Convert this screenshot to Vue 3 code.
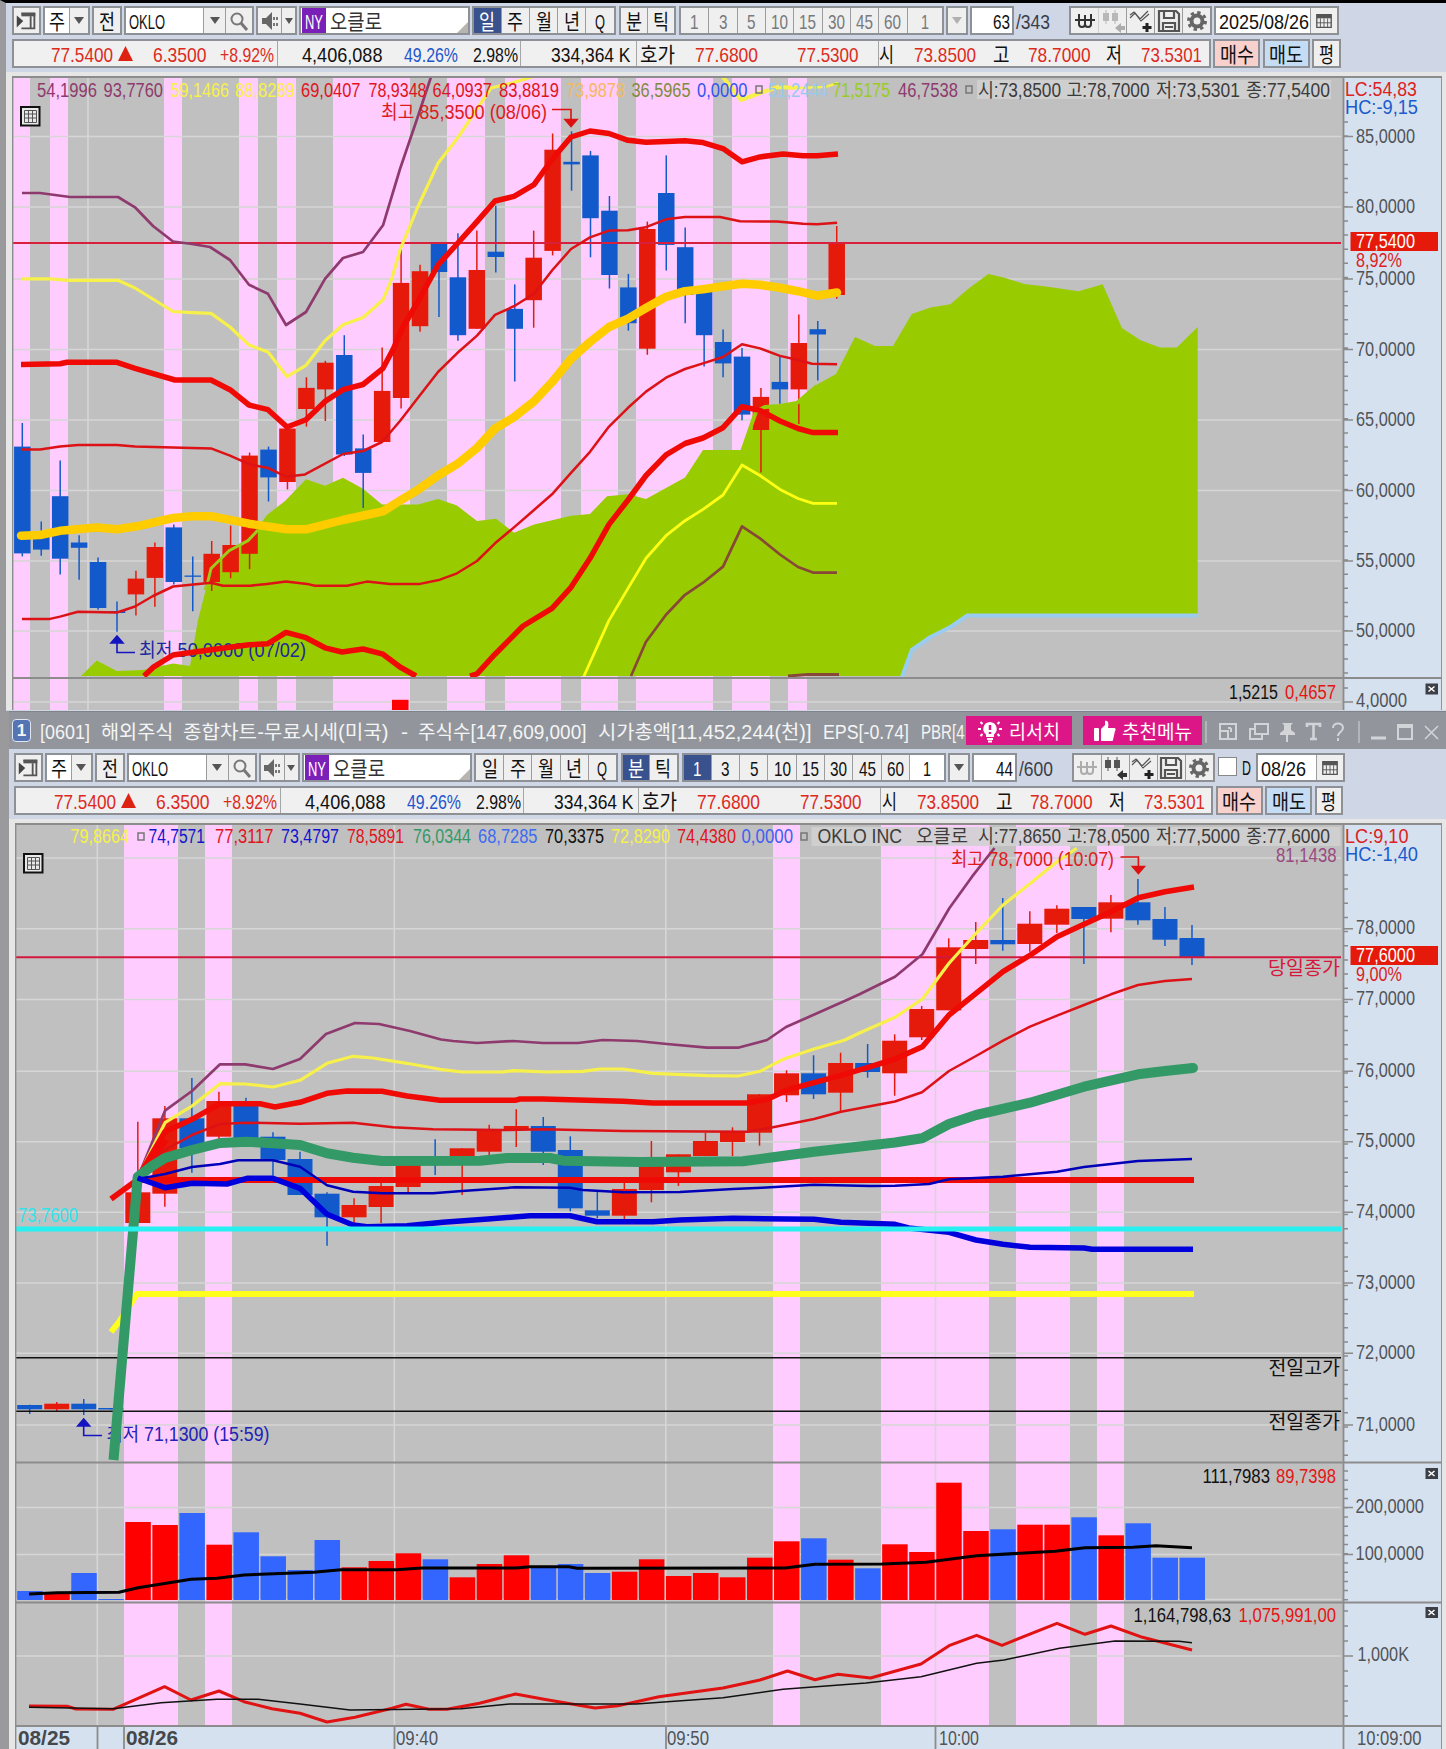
<template>
  <div class="screen">
    <section v-for="w in fenetres" :key="w.id" class="win" :class="'win' + w.id">
      <!-- title bar, only on the second window -->
      <header v-if="w.id == 2" class="titlebar">
        <span class="badge">1</span>
        <Txt v-for="(s, i) in titre" :key="i" :t="s[2]" :w="s[1]" :style="{ marginLeft: s[0] + 'px' }" />
        <button class="promo research">
          <svg width="26" height="26" viewBox="0 0 26 26">
            <path d="M13 4a7 7 0 0 0-4 12.5V19h8v-2.500A7 7 0 0 0 13 4z" fill="#fff" />
            <path d="M10 21h6M11 23.500h4M1 11h3M22 11h3M3.500 4l2 2M22.500 4l-2 2M3.500 18l2-2M22.500 18l-2-2" stroke="#fff" stroke-width="2" fill="none" />
            <path d="M13 7v5M13 14v2" stroke="#dd1688" stroke-width="2.500" />
          </svg>
          <Txt t="리서치" :w="51" />
        </button>
        <button class="promo menu">
          <svg width="23" height="24" viewBox="0 0 23 24">
            <rect x="1" y="9" width="5" height="13" rx="1" fill="#fff" />
            <path d="M8 10l4-4V2c3-1 4 2 3 7h6c2 0 2 2 1 3l-2 9c0 1-1 1-2 1H8z" fill="#fff" />
          </svg>
          <Txt t="추천메뉴" :w="70" />
        </button>
        <svg class="sysicons" width="239" height="30" viewBox="1204 0 239 30" fill="none" stroke="#d2d4d8" stroke-width="2">
          <path d="M1207 5v22M1360 5v22" stroke-width="1" />
          <path d="M1221 8h16v15h-16zM1221 15h8v8M1232 12h-3M1232 12v4" />
          <path d="M1256 8h13v10h-13zM1256 13h-5v10h12v-5" />
          <path d="M1283 7h11l-2 2v5l4 3v2h-15v-2l4-3V9z" fill="#d2d4d8" stroke="none" />
          <path d="M1288 18v8" />
          <path d="M1308 11V8h13v3M1314.500 8v15M1311 23h7" stroke-width="2.600" />
          <path d="M1334 12c0-6 10-6 10 0c0 4-5 4-5 8M1339 22v3" />
          <path d="M1372 22h15" stroke-width="3" />
          <path d="M1399 9h14v14h-14zM1399 11h14" />
          <path d="M1426 10l13 13M1439 10l-13 13" stroke-width="1.500" />
        </svg>
      </header>

      <div class="toolbar">
        <div class="box w-doc">
          <svg width="27" height="27" viewBox="0 0 27 27">
            <path d="M8 6h14v16H8M18 9v13" fill="none" stroke="#555" stroke-width="2" />
            <path d="M8 5h15v4H8z" fill="#555" /><path d="M3 8l7 6-7 7z" fill="#444" />
          </svg>
        </div>
        <div class="box w-kind">
          <div class="field f1"><Txt t="주" :w="16" /></div>
          <div class="cell"><i class="arrow"></i></div>
        </div>
        <div class="box w-prev"><Txt t="전" :w="16" /></div>
        <div class="box w-code">
          <div class="field f2"><Txt t="OKLO" :w="36" /></div>
          <div class="cell w22"><i class="arrow"></i></div>
          <div class="cell">
            <svg width="22" height="24" viewBox="0 0 22 24" fill="none" stroke="#777"><circle cx="9" cy="10" r="5.500" stroke-width="2" /><path d="M13 14l6 7" stroke-width="3" /></svg>
          </div>
        </div>
        <div class="box w-sound">
          <div class="cell">
            <svg width="22" height="24" viewBox="0 0 22 24"><path d="M3 9h4l6-6v18l-6-6H3z" fill="#666" /><path d="M15 8v3M18 8v3M15 14v3M18 14v3" stroke="#777" stroke-width="2" /></svg>
          </div>
          <div class="cell w14"><i class="arrow small"></i></div>
        </div>
        <div class="box w-name">
          <span class="ny"><Txt t="NY" :w="18" /></span>
          <Txt t="오클로" :w="52" /><i class="corner"></i>
        </div>
        <div class="box w-period">
          <div v-for="p in ['일', '주', '월', '년', 'Q']" :key="p" class="cell" :class="{ on: w.on.includes(p) }"><Txt :t="p" :w="p == 'Q' ? 10 : 16" /></div>
        </div>
        <div class="box w-tick">
          <div v-for="p in ['분', '틱']" :key="p" class="cell" :class="{ on: w.on.includes(p) }"><Txt :t="p" :w="16" /></div>
        </div>
        <div class="box w-mins" :class="{ off: w.id == 1 }">
          <div v-for="n in ['1', '3', '5', '10', '15', '30', '45', '60']" :key="n" class="cell" :class="{ on: w.on.includes(n) }"><Txt :t="n" :w="n.length * 8.5" /></div>
          <div class="cell w35" :class="{ white: w.id == 2 }"><Txt t="1" :w="8" /></div>
        </div>
        <div class="box w-drop" :class="{ off: w.id == 1 }"><i class="arrow"></i></div>
        <div class="box w-count"><Txt :t="w.nb" :w="17" /></div>
        <div class="total"><Txt :t="w.total" :w="34" /></div>
        <div class="box w-icons">
          <div class="cell" :class="{ dim: w.id == 2 }">
            <svg width="20" height="20" viewBox="0 0 20 20" fill="none" stroke="#333" stroke-width="2"><path d="M4 3v10q0 3 3 3t3-3V4M10 13q0 3 3 3t3-3V3M0 9h20" /></svg>
          </div>
          <div class="cell" :class="{ dim: w.id == 1 }">
            <svg width="26" height="26" viewBox="0 0 26 26"><path d="M3 5h6v8H3zM12 5h6v8h-6z" fill="#555" /><path d="M6 2v14M15 2v14" stroke="#555" /><path d="M15 20l6-5v3h4v4h-4v3z" fill="#333" /></svg>
          </div>
          <div class="cell">
            <svg width="26" height="26" viewBox="0 0 26 26" fill="none" stroke="#555"><path d="M2 10l5-5 5 6 8-8M2 7l4-3 7 9 8-7" stroke-width="1.200" /><path d="M19 15v9M14.500 19.500h9" stroke="#222" stroke-width="3" /></svg>
          </div>
          <div class="cell">
            <svg width="24" height="24" viewBox="0 0 24 24" fill="none" stroke="#555" stroke-width="2.200"><path d="M2 2h17l3 3v17H2zM7 2v7h10V2M6 22v-8h12v8M8 18h8" /></svg>
          </div>
          <div class="cell">
            <svg width="24" height="24" viewBox="0 0 24 24" fill="none" stroke="#666"><circle cx="12" cy="12" r="5.500" stroke-width="4" /><circle cx="12" cy="12" r="8.500" stroke-width="3" stroke-dasharray="3.340 3.336" /></svg>
          </div>
        </div>
        <template v-if="w.id == 2">
          <span class="check"></span><Txt class="dd" t="D" :w="9" />
        </template>
        <div class="box" :class="'w-date' + w.id">
          <div class="field f3"><Txt :t="w.date" :w="w.dateW" /></div>
          <div class="cell cal">
            <svg width="18" height="18" viewBox="0 0 20 20" fill="none" stroke="#555"><path d="M2 3h16v14H2z" stroke-width="1.500" /><path d="M2 5h16" stroke-width="4" /><path d="M6 7v10M10 7v10M14 7v10M2 12h16" /></svg>
          </div>
        </div>
      </div>

      <div class="quotes">
        <div class="qbox">
          <template v-for="(q, i) in cours" :key="i">
            <span v-if="q[2] == '|'" class="sep" :style="{ marginLeft: q[0] + 'px' }"></span>
            <svg v-else-if="q[2] == '^'" class="tri" width="15" height="15"><path d="M0 15L7.500 0L15 15z" fill="#dd2211" /></svg>
            <Txt v-else :t="q[2]" :w="q[1]" :class="q[3]" :style="{ marginLeft: q[0] + 'px' }" />
          </template>
        </div>
        <div class="box buy"><Txt t="매수" :w="34" /></div>
        <div class="box sell"><Txt t="매도" :w="34" /></div>
        <div class="box avg"><Txt t="평" :w="15" /></div>
      </div>

      <div class="chartframe">
        <svg class="chart" :width="w.w" :height="w.h" :viewBox="`${w.x} ${w.y} ${w.w} ${w.h}`">
          <rect :x="w.x" :y="w.y" :width="w.w" :height="w.h" fill="#c0c0c0" />
          <g shape-rendering="crispEdges">
            <rect v-for="(b, i) in w.bandes" :key="i" :x="b[0]" :y="w.y" :width="b[1] - b[0]" :height="w.bas - w.y" fill="#ffccff" />
          </g>
          <g stroke="#d6d6d6" stroke-width="1.600">
            <line v-for="y in w.grille" :key="'h' + y" :x1="w.x" x2="1341" :y1="y" :y2="y" />
            <line v-for="x in w.gv" :key="'v' + x" :x1="x" :x2="x" :y1="w.y" :y2="w.bas" />
          </g>
          <path v-if="w.nuage" :d="'M' + w.nuage + 'L1197.700 614 967 614 950 626 930 636 911 649 902 676z'" fill="#99cc00" />

          <!-- candles: high, top, bottom, low -->
          <g v-for="(c, i) in w.bougies" :key="'c' + i" :fill="c[0] ? '#e61a0a' : '#125acb'" :stroke="c[0] ? '#e61a0a' : '#125acb'">
            <line :x1="w.x0 + i * w.pas" :x2="w.x0 + i * w.pas" :y1="c[1]" :y2="c[4]" stroke-width="1.500" />
            <rect :x="w.x0 + i * w.pas - w.larg / 2" :y="c[2]" :width="w.larg" :height="Math.max(c[3] - c[2], 1.3)" stroke="none" />
          </g>

          <!-- volume bars -->
          <rect v-for="(b, i) in w.volumes" :key="'b' + i" :x="w.x0 + i * w.pas - 12.5" :y="b[1]" width="25.500" :height="1600 - b[1]" :fill="b[0] ? '#ff0000' : '#3366ff'" />
          <rect v-if="w.id == 1" x="392" y="699.800" width="16.500" height="11" fill="#f00" />

          <line v-for="(l, i) in w.horiz" :key="'z' + i" :x1="w.x" x2="1341" :y1="l[0]" :y2="l[0]" :stroke="l[1]" :stroke-width="l[2]" />
          <Texte v-for="(t, i) in w.dessous" :key="'d' + i" :d="t" />
          <polyline v-for="(l, i) in w.lignes" :key="'l' + i" :points="l[2]" fill="none" :stroke="l[0]" :stroke-width="l[1]" stroke-linejoin="round" :stroke-linecap="l[1] == 8.5 ? 'round' : 'butt'" />
          <circle v-if="w.id == 2" cx="1193" cy="1068" r="5" fill="#339966" />

          <!-- strip behind the last values -->
          <rect :x="w.fond" :y="w.y + 4" :width="w.id == 1 ? 354 : 529" height="19" fill="#d0d0d0" fill-opacity="0.900" />
          <rect v-for="x in w.carres" :key="'k' + x" :x="x" :y="w.y + 10" width="6" height="7" fill="none" stroke="#777" stroke-width="1.500" />
          <g :transform="`translate(${w.x + 8} ${w.y + 30})`">
            <rect x="1" y="1" width="18.500" height="18.500" fill="#e8e8e8" stroke="#111" stroke-width="2" />
            <path d="M4.500 4.500h12v12h-12zM8.500 4.500v12M12.500 4.500v12M4.500 8h12M4.500 12h12" fill="none" stroke="#555" />
          </g>
          <path v-for="(a, i) in w.fleches" :key="'f' + i" :d="a[1]" :stroke="a[0]" :fill="a[2] ? a[0] : 'none'" stroke-width="1.600" />

          <!-- price axis -->
          <rect x="1343.500" :y="w.y" width="99" :height="w.h" fill="#d6e1ef" />
          <rect v-if="w.id == 2" x="15" y="1726" width="1328" height="23" fill="#d6e1ef" />
          <path :d="w.axe" stroke="#8a8a8a" stroke-width="1.500" fill="none" />
          <rect x="1350.500" :y="w.etiq" width="87.500" height="19" fill="#e61a0a" />
          <g v-for="y in w.fermer" :key="'x' + y">
            <rect x="1425.500" :y="y" width="12.500" height="11" fill="#3c4046" />
            <path :d="`M1428.500 ${y + 3}l6 5m0-5l-6 5`" stroke="#fff" stroke-width="1.500" />
          </g>
          <Texte v-for="(t, i) in w.textes" :key="'t' + i" :d="t" />
          <path :d="w.cadre" stroke="#8c8c8c" stroke-width="1.800" fill="none" />
        </svg>
      </div>
    </section>
  </div>
</template>

<script setup>
import { h } from 'vue'

// condensed label with a fixed width
const Txt = (props) =>
  h('svg', { class: 'txt', width: props.w, height: 20 }, [
    h('text', { x: 0, y: 17.5, textLength: props.w, lengthAdjust: 'spacingAndGlyphs' }, props.t),
  ])
Txt.props = ['t', 'w']

// chart label: [x start, x end, baseline, text, colour, bold]
const Texte = (props) => {
  const [x, x2, y, t, c, b] = props.d
  return h('text', { x, y, textLength: x2 - x, lengthAdjust: 'spacingAndGlyphs', fill: c, 'font-weight': b ? 700 : 400 }, t)
}
Texte.props = ['d']

const titre = [
  [9, 50, '[0601]'],
  [10.5, 72.5, '해외주식'],
  [10, 205.5, '종합차트-무료시세(미국)'],
  [12, 7, '-'],
  [10, 168.5, '주식수[147,609,000]'],
  [11.5, 213.5, '시가총액[11,452,244(천)]'],
  [11.5, 86, 'EPS[-0.74]'],
  [12, 43.5, 'PBR[4'],
]

// gap, width, text, colour class
const cours = [
  [37.5, 62, '77.5400', 'up'],
  [0, 0, '^'],
  [20, 53.5, '6.3500', 'up'],
  [13.5, 54, '+8.92%', 'up'],
  [3, 0, '|'],
  [24, 80.5, '4,406,088'],
  [21.5, 54, '49.26%', 'down'],
  [15, 45, '2.98%'],
  [2, 0, '|'],
  [30, 79.5, '334,364 K'],
  [5, 0, '|'],
  [3, 35, '호가'],
  [20, 63, '77.6800', 'up'],
  [39.5, 61.5, '77.5300', 'up'],
  [19, 0, '|'],
  [0.5, 15, '시'],
  [20, 62, '73.8500', 'up'],
  [17, 16.5, '고'],
  [18, 62.5, '78.7000', 'up'],
  [16, 16, '저'],
  [19, 61, '73.5301', 'up'],
]

const R = '#e0141c'
const Y = '#f7f04a'
const P = '#8f3a6e'
const G = '#505458'
const B = '#1414c0'

// tick marks of one axis, every `pas` px, long at the values of `grands`
const graduations = (debut, fin, pas, grands) => {
  let d = ''
  for (let y = debut; y < fin; y += pas) d += `M1344 ${y.toFixed(1)}h4`
  grands.forEach((y) => { d += `M1344 ${y}h9` })
  return d
}

/* daily chart */
const grille1 = [136.500, 207, 279, 349.500, 420, 490.500, 561, 631]
const bougies1 = [
  [0, 423, 446.6, 553.4, 556.4], [0, 521.4, 534, 549.6, 555.7], [0, 460.5, 496.2, 558.7, 574.5], [0, 535.3, 542.5, 547.8, 579.7],
  [0, 557.5, 562, 608, 609.8], [0, 601.6, 611, 613, 631.7], [1, 570.7, 578.6, 594.4, 615.5], [1, 542.5, 547, 577.9, 606.8],
  [0, 524.4, 527.4, 582, 584.6], [0, 556.4, 575.5, 576.8, 611.3], [1, 541, 553.8, 582, 591], [1, 525.6, 545, 572.2, 578.2],
  [1, 452.6, 455.6, 553.8, 569.2], [0, 446.6, 449.6, 477.4, 501.5], [1, 426.6, 428.5, 482, 489.4], [1, 377.3, 387.9, 409, 426.6],
  [1, 360.8, 362.7, 389.4, 421], [0, 335.2, 355, 454.5, 456], [0, 434.5, 448.4, 472.9, 507.9], [1, 347.6, 390.9, 442, 442],
  [1, 248, 282.9, 398, 408.6], [1, 264.8, 271.2, 326.2, 331.8], [0, 243.4, 243.4, 272, 317], [0, 233.2, 277.3, 335.2, 340.8],
  [1, 230.6, 270, 328.8, 328.8], [0, 205.8, 251.7, 257, 272.4], [0, 284.4, 308.9, 328.8, 381.5], [1, 230.6, 257.7, 300.2, 327.7],
  [1, 133.5, 149.7, 250.9, 255.4], [0, 131.3, 161.8, 164.4, 190.7], [0, 150.9, 155.4, 218.2, 257.3], [0, 196, 210.7, 275, 288.5],
  [0, 273.9, 287.4, 323.2, 330.7], [1, 221.6, 229, 348.7, 354.8], [0, 155.4, 193, 244.9, 270.5], [0, 227.6, 247.2, 295, 323.2],
  [0, 290, 292, 335.2, 366.4], [0, 329.6, 342, 363.4, 377.3], [0, 348, 356.6, 414.6, 420.2], [1, 387.9, 396.9, 430, 472.5],
  [0, 357, 381.9, 389.4, 403.7], [1, 314.5, 343, 389.4, 424], [0, 321, 329.2, 334.5, 380.4], [1, 226, 243.4, 295, 298.7],
]
const nuage1 = '81,676 96.7,660.6 116.7,671 143,670 173,663.6 190,666 198,620 208,581 211,568.5 229,550.8 248,540.6 267,515 285,501 306,479.3 325,485.7 343,477.8 363,488.7 382,504.5 418,504.5 438,499 457,505.6 477,521 496,518.8 514,532.7 534,524.4 571,515.8 590,514 607,496.2 628,494.3 646,498.9 685,477.4 703,450 742,450 756,411.6 780,406 797,403 817,384.5 836,374 855,337 875,346 893,346 911.8,314 930.5,307.5 950.4,304.3 967.4,289.6 988.3,274 1002.7,277.3 1024.4,283.9 1049.7,287 1078.6,291.2 1102.7,284.3 1121.9,328 1140.6,340.2 1159.8,347.5 1176.8,347.5 1197.7,327'
const lignes1 = [
  ['#99ccee', 4, '902,677 911.8,650 930.5,637 950.4,627 967.4,615.500 1197.7,615.500'],
  ['#9ccc1c', 3, '205,590 208,581 211,568.5 229,550.8 248,540.6 258,530'],
  ['#99cc00', 4, '742,452 756,411.6 765,407 780,406 797,403 817,386'],
  [P, 2.7, '22,193 40,193 70,197 118,197 135,207.3 153,226 173,241.5 192,244 210,247 230,260 249,284.8 268,293.8 286,325 306,312 325,278.8 343,258 363,252 383,225.3 400,169 416.7,120 431,77'],
  [Y, 3.2, '22,278.8 50,278.8 68,280.3 118,280.3 135,288 173,311.5 192,312.6 211,313.4 230,327 249,345 268,352 287,376.6 306,365.3 325,340.8 343,324.7 363,317.5 383,299.8 392,278 400,249.8 418,206.5 438,163.3 457,138.8 491,88 512,83 532,77'],
  [Y, 4, '723,77 730,86 741,100 760,93 778,87 798,88'],
  [Y, 2.5, '798,88 825,87 838,83'],
  ['#f00a05', 5.5, '21,364.5 60,363.8 67,362.3 117,362.3 135,368.3 175,380 211,380 230,389.7 249,405 268,409.7 287,427 306,419.8 325,401.4 343,389.7 363,384.5 383,368.3 393,349.5 403,327 418,301.3 438,265 457,244 477,221.6 495,201 514,196.4 534,184.7 552,159.5 571,137 590,131 609,133.5 628,140.3 646,142.2 666,141.4 685,140.7 703,142.6 723,148.6 742,161.8 760,156.9 783,153.9 803,155.7 817,155.7 838,153.9'],
  ['#dc1216', 2.5, '22,449.6 40,449.6 60,446.6 78,445 117,445 135,446.6 211,448.4 230,455.6 249,464.2 268,468 286,476.7 305,474.4 343,454 363,451 382,442 400,421 418,397.7 438,372 457,353.3 477,335.6 495,314.9 514,306.2 534,293.8 552,270.5 571,249 590,237.4 609,230.6 628,230.2 646,227.2 666,219.3 685,217 720,217 740,221.2 777,221.6 803,223.8 817,224.2 837,222.7'],
  ['#dc1216', 2.5, '22,618.9 50,618.9 60,616.6 78,611.7 117,612.5 135,606.5 153,596 173,586.5 211,582.7 223,585.8 250,585.8 267,583.9 286,581.6 307,583.9 315,585.8 347,585.8 367,581.6 390,583.9 420,583.9 440,579.7 457,573.3 477,561 495,543.3 514,527.4 534,510 552,494.3 571,472.9 590,451.8 609,426.6 628,407.8 646,391.6 666,377.7 685,369 703,363.4 723,357 742,344.2 760,348.4 780,355.9 798,360 812,363.8 837,364.2'],
  ['#f00a05', 5.5, '144,676 153,667.4 173,655 211,649.7 249,644.8 268,643.7 286,632.4 306,637.7 325,647.8 342,652 363,649 383,654.2 400,667 416,676'],
  ['#f00a05', 5.5, '470,676 477,673.8 495,654.2 523,626 552,608.3 571,587.3 590,558.3 609,524.4 628,500 646,475.5 666,454.8 685,443.5 703,438 723,427.7 742,406.7 760,410.4 780,421 798,428.5 813,432.6 838,432.6'],
  ['#ffff14', 2.8, '584,676 609,620.4 628,588.4 646,558.3 666,535.7 685,520.7 703,509.4 723,495 742,465 760,475.5 780,489.4 798,498.5 813,503.4 837,503.4'],
  ['#884838', 2.7, '631,676 646,641.8 666,614.7 685,594.8 703,582.7 723,566.6 742,526.3 760,538.4 780,554.5 798,567 813,572.6 837,572.6'],
  ['#884838', 3, '788,676 808,674.5 839,674.5'],
  ['#ffcc00', 8.5, '21,535.7 40,535 60,530.8 97,527.4 117,529.3 137,526.3 173,518 192,516.2 211,516.2 249,523.7 287,529.3 306,529.3 343,520 383,511.3 400,500.7 418,489.8 438,475.5 457,464.2 477,448 495,428.5 514,417.2 534,401.4 552,382.2 571,358.9 590,342 609,327 628,318.6 646,308 666,296.8 685,291.2 703,289.3 723,286.3 742,283.7 760,284.8 780,287.8 798,291.2 817,295.7 837,292.5'],
]

/* one minute chart */
const grille2 = [858, 928.700, 999.500, 1071.300, 1141.700, 1212.300, 1283, 1353.300, 1425]
const bougies2 = [
  [0, 1404.7, 1405, 1409.3, 1414], [1, 1402, 1403.7, 1409.3, 1411.3], [0, 1399, 1403.7, 1409.3, 1415], [0, 1408, 1408, 1409.5, 1409.5],
  [1, 1121.7, 1192.3, 1223, 1223], [1, 1106, 1118.3, 1193.7, 1206.7], [0, 1078, 1118.3, 1148.3, 1172.7], [1, 1091.7, 1101, 1136.7, 1140],
  [0, 1097.7, 1101, 1140, 1141], [0, 1132.3, 1136.7, 1160, 1175.7], [0, 1151.7, 1159, 1195, 1195], [0, 1192.3, 1193.7, 1217.3, 1245.7],
  [1, 1198.3, 1205, 1217.3, 1223.3], [1, 1182.7, 1186, 1207, 1223], [1, 1164, 1165, 1187, 1192.3], [0, 1139.3, 1158, 1160, 1175],
  [1, 1148.3, 1148.3, 1160, 1195], [1, 1124.7, 1130, 1151.7, 1155], [1, 1109.3, 1126, 1130, 1147], [0, 1117, 1126, 1151.7, 1165],
  [0, 1136.3, 1150, 1208.3, 1211.3], [0, 1191.7, 1210.3, 1215.7, 1218.3], [1, 1181.7, 1189, 1215.7, 1220], [1, 1141, 1161.7, 1190, 1202.3],
  [1, 1154.3, 1154.3, 1172.3, 1186], [1, 1132.7, 1141, 1156, 1156], [1, 1127.3, 1131.7, 1142, 1156], [1, 1094, 1094.3, 1132.7, 1145.7],
  [1, 1070.3, 1073.3, 1095.3, 1102], [0, 1055.3, 1073.3, 1094.3, 1099], [1, 1052.7, 1063, 1092.7, 1111], [0, 1044, 1063, 1072, 1077.7],
  [1, 1034.3, 1040.7, 1073.3, 1095.7], [1, 1006, 1009, 1037.3, 1040], [1, 938.3, 947.3, 1010.3, 1010.3], [1, 922, 940, 949, 964],
  [0, 898, 940, 944.3, 950.7], [1, 911.3, 923.7, 944, 951.7], [1, 905.3, 908.7, 924.7, 933], [0, 907, 907, 919, 964],
  [1, 895, 902.3, 918.7, 932.3], [0, 879, 902.3, 920.3, 924.7], [0, 907, 919, 939.7, 946], [0, 925, 938, 957, 965],
]
const volumes2 = [
  [0, 1591], [1, 1592], [0, 1573], [0, 1599], [1, 1522], [1, 1525], [0, 1513], [1, 1544.7], [0, 1532.3], [0, 1556.3], [0, 1570],
  [0, 1540], [1, 1567.3], [1, 1561], [1, 1553.3], [0, 1559.3], [1, 1577.3], [1, 1564], [1, 1555.3], [0, 1567.3], [0, 1564], [0, 1573],
  [1, 1571.7], [1, 1559.3], [1, 1576], [1, 1573], [1, 1577.3], [1, 1557.7], [1, 1541.3], [0, 1538.3], [1, 1559.7], [0, 1568.3],
  [1, 1544.3], [1, 1552], [1, 1482.7], [1, 1531], [0, 1529.3], [1, 1524.7], [1, 1524.7], [0, 1517.3], [1, 1535.3], [0, 1523.3],
  [0, 1557.7], [0, 1557.7],
]
const lignes2 = [
  ['#ffff1e', 6, '111,1332 119,1322 137,1294 1194,1294'],
  ['#f00a05', 5.8, '111,1199 137,1180 1194,1180'],
  [P, 2.7, '137.7,1178 165,1110.7 192,1091 220,1064.3 245,1064.3 273,1069 300,1059 326,1034 355,1023 379,1024 410,1031 441,1039.5 453,1041 477,1043 513,1041 543,1043 578,1043 603,1040 637,1041 667,1044 707,1047.7 738,1047.7 767,1040 786,1027 848,999.6 860,994 895,976.7 922.4,954.3 949.3,908.3 972,876.7 994.5,848'],
  [Y, 3.2, '137.7,1178 165,1122.7 192,1106 220,1083.7 245,1084 273,1087 300,1080.3 327,1063.3 353,1056.3 373,1058 407,1063.3 440,1069.3 462,1072 502,1072 513,1070.7 547,1072 583,1071.3 600,1069 623,1069 653,1073.3 707,1075.7 738,1076 760,1071.3 783,1059.3 814,1049 845,1040 860,1032.7 895,1017.3 922.4,999 949,963.3 976,933.3 1003,905 1030.4,883.3 1057,861.7 1076.7,848.3'],
  ['#f00a05', 5.5, '137.7,1178 165,1131.7 192,1119.3 220,1103.7 260,1103.7 275,1107 300,1102.3 327,1093.3 347,1091 382,1091.3 407,1096 440,1100.3 515,1100.3 520,1099 543,1099 623,1101.3 653,1103 747,1103 768,1099 787,1090 814,1082.7 841,1075.3 868,1067.3 895,1059 922.4,1046.7 949,1015 976,993.3 1003,971.7 1030.4,955 1057,936.7 1084,924.3 1111,911.7 1138.4,897.7 1165,891.7 1194,887'],
  ['#dc1216', 2.5, '137.7,1178 165,1150 192,1135 220,1124 245,1122.7 300,1123.7 353,1122.7 393,1127.3 433,1129.3 503,1130 543,1129.3 623,1131 747,1131.7 773,1127.3 814,1119 841,1111.7 895,1101.5 922,1092.3 949,1071 976,1056 1003,1040.7 1030,1026.7 1057,1015.7 1084,1005 1111,994.3 1138,985 1165,981 1192,979'],
  // fan between the two red bands at the opening
  ['#f00a05', 6, '139,1176 166,1140'],
  ['#339966', 10, '113.5,1460 137.7,1177 152,1166 165,1158 192,1150 220,1143 247,1141.7 273,1143.3 300,1145 327,1153.3 353,1157.7 382,1161 480,1160.7 507,1158 550,1158 563,1160.7 640,1162 743,1161.3 773,1157.3 814,1151.7 895,1142.5 922,1138.3 949,1124 976,1115 1030,1102.7 1084,1086.7 1138,1074.3 1165,1071 1193,1068'],
  ['#0000b8', 2.5, '137.7,1179 165,1174 192,1167 220,1164 238,1160.3 273,1160.3 300,1166.7 327,1185.3 353,1191.7 382,1193.3 433,1193.3 462,1191 515,1187.3 570,1187.7 583,1190 623,1192.3 680,1192 733,1189 762,1187.7 814,1184.7 870,1186 895,1185.7 929,1184 949,1179.3 1003,1176.7 1057,1171.7 1084,1167 1138,1161 1192,1159'],
  ['#0000dc', 5.5, '137.7,1178 165,1187.7 192,1183.3 227,1184 247,1178.3 273,1178.3 300,1188.3 327,1214.3 353,1225 367,1226.7 407,1225.7 443,1222.3 488,1219 530,1215.7 570,1215.7 597,1221.7 653,1221.7 680,1220 733,1218.3 787,1219 814,1219.3 841,1222.3 895,1224.3 908.6,1228 949,1232.3 976,1240 1003,1244.3 1030,1247.3 1084,1248 1092,1249.3 1193,1249.3'],
  ['#28f0f0', 5, '15,1229 1341,1229'],
  ['#000', 3, '29,1594 57,1592.7 119,1592.3 138,1587.7 191,1579.3 217,1578.3 244,1575 313.5,1572.3 341,1569.7 396.5,1569.7 422,1568 516,1568 530,1566.7 569,1566.7 577,1568.3 785,1568 815,1564.3 882,1564 926,1562.3 976.6,1555.7 1055,1551.3 1085,1547.7 1133,1547.3 1156,1545.7 1192,1547.7'],
  ['#e01212', 3, '29,1706 67,1706.3 76,1709 113,1709.3 138,1698.3 164.6,1686.7 191,1700 219,1691 244,1701.7 272,1708.7 300,1713.3 327,1722 355,1717.3 392,1708.3 406,1704.3 429,1709.3 447,1709.3 479.5,1703.3 515.5,1694 544,1699.3 595,1708 618,1705.7 659,1696.7 691.6,1692.3 723,1688 760,1680 787.5,1671 815,1679.7 838,1674.3 870.5,1678 921,1664 949,1645.7 976.6,1635.3 1002,1645.3 1057,1623.3 1085,1634.3 1111,1626 1142.5,1637.3 1192,1650'],
  ['#111', 1.4, '29,1707.3 113,1708.7 161,1702.7 217,1699.3 258,1699.3 300,1704 350,1710 461,1708.7 509.5,1704 636,1704 723,1697.7 783,1689.3 866,1683 921,1676.7 976.6,1663.3 1004,1660 1059.6,1648.3 1115,1641 1179,1641.3 1192,1642.7'],
]

const fenetres = [
  {
    id: 1, on: ['일'], nb: '63', total: '/343', date: '2025/08/26', dateW: 90,
    x: 12, y: 76, w: 1430, h: 634, bas: 710, x0: 22.3, pas: 18.94, larg: 16.5,
    bandes: [[12, 30], [50, 68], [164, 182], [239, 258], [277, 296], [333, 410], [447, 485], [505, 561], [581, 618], [636, 713], [732, 770], [788, 807]],
    grille: [...grille1, 702], gv: [88], bougies: bougies1, nuage: nuage1, lignes: lignes1,
    horiz: [[243, '#d8203c', 2]],
    fond: 977, carres: [756, 966], etiq: 232, fermer: [683.5],
    axe: graduations(122, 676, 14.13, grille1) + 'M1344 688h4M1344 702h9',
    cadre: 'M12 77H1442M12.500 76V710M1343.500 76V710M1442 76V710M12 678H1442',
    fleches: [
      ['#dd1111', 'M552 109.500H571V120'], ['#dd1111', 'M565 119.500h12l-6 7z', 1],
      [B, 'M117 642V652.500H135'], [B, 'M111 643h12l-6-7z', 1],
    ],
    dessous: [[139, 306, 657, '최저 50,0000 (07/02)', '#1c28a0']],
    textes: [
      [37, 97, 97, '54,1996', P], [103.5, 163, 97, '93,7760', P], [170.5, 229, 97, '59,1466', Y], [235, 295, 97, '88,8289', Y],
      [301, 360.5, 97, '69,0407', R], [368.5, 426.5, 97, '78,9348', R], [432.5, 492, 97, '64,0937', R], [499, 559, 97, '83,8819', R],
      [566, 625, 97, '73,9878', '#f5b860'], [631.5, 690.5, 97, '36,5965', '#7d8c3c'], [697, 747.5, 97, '0,0000', '#3355ee'],
      [768, 828, 97, '51,2444', '#99c8ee'], [832.5, 890, 97, '71,5175', '#99cc22'], [898, 958, 97, '46,7538', P],
      [978, 1061, 97, '시:73,8500', '#3c3c3c'], [1066.5, 1149.5, 97, '고:78,7000', '#3c3c3c'], [1156, 1240, 97, '저:73,5301', '#3c3c3c'], [1246, 1330, 97, '종:77,5400', '#3c3c3c'],
      [381, 547, 119, '최고 85,3500 (08/06)', '#dd1c1c'],
      [1345, 1417, 95.5, 'LC:54,83', '#dd2222'], [1345, 1418, 113.5, 'HC:-9,15', '#1a5ccc'],
      ...grille1.map((y, i) => [1356, 1415, y + 6, 85 - i * 5 + ',0000', G]),
      [1356, 1415, 248, '77,5400', '#fff'], [1356, 1402, 267, '8,92%', '#dd2222'],
      [1229, 1278, 698.5, '1,5215', '#111'], [1285, 1336, 698.5, '0,4657', '#e61414'], [1356, 1407, 707, '4,0000', G],
    ],
  },
  {
    id: 2, on: ['분', '1'], nb: '44', total: '/600', date: '08/26', dateW: 45,
    x: 15, y: 823, w: 1427, h: 926, bas: 1726, x0: 29.7, pas: 27.03, larg: 25,
    bandes: [[124, 177.5], [204.5, 231.5], [773, 800], [881, 989], [1016, 1070], [1097, 1124]],
    grille: [...grille2, 1507.5, 1554.5, 1599.5, 1656], gv: [97.3, 394.3, 665.8, 935.5],
    bougies: bougies2, volumes: volumes2, lignes: lignes2,
    horiz: [[957.3, '#d4183c', 2], [1357.7, '#111', 1.6], [1411.3, '#111', 1.6]],
    fond: 811.5, carres: [138, 801], etiq: 946, fermer: [1468, 1607],
    axe: graduations(875, 1460, 14.15, grille2.slice(1)) + graduations(1471, 1600, 9.2, [1507.5, 1554.5]) + graduations(1611, 1725, 15, [1656]),
    cadre: 'M15 824H1442M15.500 823V1749M1343.500 823V1749M1442 823V1749M15 1462.500H1442M15 1602.500H1442M15 1726H1442M97.500 1726v23M124 1726v23M394.500 1726v23M666 1726v23M935.500 1726v23',
    fleches: [
      ['#dd1111', 'M1120.500 857H1138.400V867'], ['#dd1111', 'M1132.400 866.500h12l-6 7z', 1],
      [B, 'M83.700 1426V1435.500H102'], [B, 'M77.700 1426h12l-6-7z', 1],
    ],
    dessous: [[106.5, 269.5, 1441, '최저 71,1300 (15:59)', '#2222b8']],
    textes: [
      [70.5, 129, 843, '79,8664', Y], [148.5, 205, 843, '74,7571', '#1414cc'], [215, 273.5, 843, '77,3117', R], [281, 339, 843, '73,4797', '#1414cc'],
      [347, 404, 843, '78,5891', R], [413, 471, 843, '76,0344', '#339966'], [478, 537.5, 843, '68,7285', '#3d6cf0'], [545, 604, 843, '70,3375', '#111'],
      [611, 670, 843, '72,8290', Y], [677, 736, 843, '74,4380', R], [741.5, 793, 843, '0,0000', '#4060ee'],
      [817.5, 902, 843, 'OKLO INC', '#3c3c3c'], [916, 968, 843, '오클로', '#3c3c3c'],
      [978, 1061, 843, '시:77,8650', '#3c3c3c'], [1066.5, 1149.5, 843, '고:78,0500', '#3c3c3c'], [1156, 1240, 843, '저:77,5000', '#3c3c3c'], [1246, 1330, 843, '종:77,6000', '#3c3c3c'],
      [951, 1114, 865.5, '최고 78,7000 (10:07)', '#dd1c1c'], [1276, 1336.5, 861.5, '81,1438', '#9a4a80'],
      [1345, 1408.5, 842.5, 'LC:9,10', '#dd2222'], [1345, 1418, 860.5, 'HC:-1,40', '#1a5ccc'],
      ...grille2.slice(1).map((y, i) => [1356, 1415, y + 5.5, 78 - i + ',0000', G]),
      [1356, 1415, 962, '77,6000', '#fff'], [1356, 1402, 981, '9,00%', '#dd2222'],
      [1268, 1340, 975, '당일종가', '#d4183c'], [1268.5, 1340, 1375, '전일고가', '#111'], [1268.5, 1340, 1429, '전일종가', '#111'],
      [18, 78, 1221.5, '73,7600', '#30e4ec'],
      [1202.5, 1270, 1483, '111,7983', '#111'], [1276, 1336, 1483, '89,7398', '#e61414'],
      [1355.5, 1424, 1513, '200,0000', G], [1355.5, 1424, 1559.5, '100,0000', G],
      [1133.5, 1231, 1622, '1,164,798,63', '#111'], [1238.5, 1336, 1622, '1,075,991,00', '#e61414'], [1357.5, 1409, 1661, '1,000K', G],
      [18, 70, 1745, '08/25', '#44484c', 1], [126, 178, 1745, '08/26', '#44484c', 1],
      [396, 438, 1745, '09:40', G], [667, 709, 1745, '09:50', G], [939, 979, 1745, '10:00', G], [1357, 1421.5, 1745, '10:09:00', G],
    ],
  },
]
</script>

<style>
body {
  margin: 0;
  background: #cfd6e6;
}
.txt {
  display: block;
  flex: none;
  overflow: visible;
  font-size: 21px;
  fill: currentColor;
}
</style>

<style scoped>
.screen {
  width: 1446px;
  height: 1749px;
  overflow: hidden;
  font-family: "Liberation Sans", "Noto Sans CJK KR", sans-serif;
  color: #111;
}
.win {
  box-sizing: border-box;
  background: #cfd6e6;
  border-left: 6px solid #9a9a9c;
}
.win1 {
  height: 711px;
  padding-top: 3px;
  border-top: 3px solid #000;
}
.win2 {
  height: 1038px;
  border-left-width: 9px;
}
.titlebar {
  height: 38px;
  display: flex;
  align-items: center;
  background: #92969c;
  border-top: 1px solid #808488;
  box-sizing: border-box;
  margin-bottom: 4px;
  color: #f4f4f4;
}
.titlebar .txt {
  font-size: 19.500px;
}
.badge {
  width: 17px;
  height: 21px;
  margin-left: 3px;
  line-height: 21px;
  text-align: center;
  font-size: 17px;
  font-weight: bold;
  background: #5474b4;
  border: 1px solid #dfe6f2;
  border-radius: 4px;
}
.promo {
  height: 29px;
  padding: 0;
  border: 0;
  background: #dd1688;
  color: #fff;
  display: flex;
  align-items: center;
  justify-content: center;
  gap: 6px;
  flex: none;
  font-family: inherit;
}
.research {
  width: 105.5px;
  margin-left: 2px;
}
.menu {
  width: 119px;
  margin-left: 11px;
}
.sysicons {
  margin-left: 1.5px;
  flex: none;
}
.toolbar {
  display: flex;
  gap: 2px;
  padding-left: 5.5px;
  height: 29px;
}
.win2 .toolbar,
.win2 .quotes {
  padding-left: 5px;
}
.box {
  box-sizing: border-box;
  height: 29px;
  border: 2px solid #8d9094;
  background: #efefef;
  display: flex;
  align-items: center;
  justify-content: center;
  flex: none;
}
.cell {
  flex: 1;
  height: 100%;
  display: flex;
  align-items: center;
  justify-content: center;
  border-left: 1px solid #9a9c9f;
}
.cell:first-child {
  border-left: 0;
}
.cell.on {
  background: #39528e;
  color: #fff;
}
.field {
  height: 100%;
  background: #fff;
  display: flex;
  align-items: center;
}
.w-doc { width: 29px; }
.w-kind { width: 47.5px; }
.w-prev { width: 30px; }
.w-code { width: 130px; }
.w-sound { width: 41px; }
.w-name {
  width: 170.5px;
  background: #fff;
  justify-content: flex-start;
  color: #333;
  gap: 4px;
}
.w-period { width: 144px; }
.w-tick {
  width: 57.5px;
  margin-left: 1px;
}
.w-mins {
  width: 264.5px;
  margin-left: 1px;
}
.w-drop { width: 22px; }
.w-count {
  width: 44.5px;
  background: #fff;
  justify-content: flex-end;
  padding-right: 2px;
}
.w-icons { width: 143px; }
.w-date1 { width: 125px; }
.w-date2 { width: 89px; }
.f1 {
  width: 24px;
  justify-content: center;
}
.f2 {
  width: 74px;
  padding-left: 3px;
}
.f3 {
  flex: 1;
  padding-left: 3px;
}
.cell.w22 { flex: 0 0 21px; }
.cell.w14 { flex: 0 0 13px; }
.cell.w35 { flex: 0 0 34px; }
.cell.cal { flex: 0 0 26px; }
.white { background: #fff; }
.off {
  color: #77797c;
}
.off .arrow {
  opacity: 0.4;
}
.dim {
  opacity: 0.35;
}
.arrow {
  border: 5.5px solid transparent;
  border-top: 7px solid #555;
  border-bottom: 0;
}
.small {
  border-width: 6px 4px 0;
}
.ny {
  width: 24px;
  height: 25px;
  margin-left: 1px;
  background: #7a1fb8;
  color: #fff;
  display: flex;
  align-items: center;
  justify-content: center;
}
.corner {
  margin-left: auto;
  align-self: flex-end;
  border-left: 11px solid transparent;
  border-bottom: 11px solid #b8b4b0;
}
.total {
  width: 51px;
  display: flex;
  align-items: center;
  color: #3a3e48;
}
.check {
  width: 17px;
  height: 17px;
  margin: 4px 1px 0 1px;
  border: 1px solid #888;
  background: #fff;
}
.dd {
  margin: 4px 3px 0 2px;
}
.quotes {
  display: flex;
  gap: 2.5px;
  padding-left: 5.5px;
  margin-top: 4px;
  height: 29px;
}
.qbox {
  box-sizing: border-box;
  width: 1199px;
  height: 29px;
  border: 2px solid #8d9094;
  background: #f0f0f0;
  display: flex;
  align-items: center;
}
.sep {
  width: 0;
  height: 25px;
  border-left: 1px solid #a4a6a8;
}
.tri {
  margin-left: 5px;
}
.up { color: #dd2a1c; }
.down { color: #2255cc; }
.buy {
  width: 47px;
  background: #f8d0cc;
}
.sell {
  width: 47px;
  background: #c4dcf4;
}
.avg { width: 28.500px; }
.chartframe {
  margin-top: 4px;
  padding: 4px 0 0 6px;
  background: #e6e6e6;
}
.chart {
  display: block;
  font-size: 19.500px;
}
</style>
